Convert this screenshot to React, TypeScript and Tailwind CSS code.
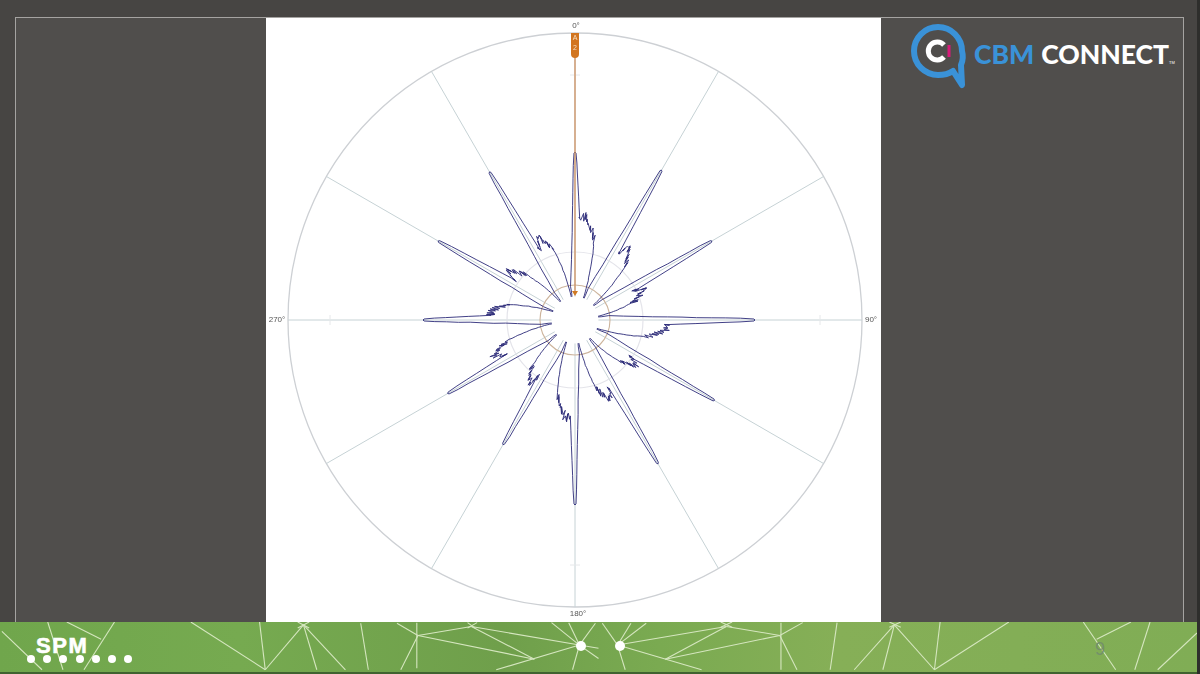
const CX = 575;
const CY = 320;

// spike tip radius and lobe radius for each 30 deg sector, clockwise from 0
const sectors = [
  [168, 104], [173, 92], [158, 76], [180, 92], [161, 76], [166, 88],
  [185, 98], [144, 78], [147, 89], [152, 86], [158, 84], [171, 92],
];

const polar = (deg: number, r: number) => {
  const rad = (deg * Math.PI) / 180;
  return [CX + r * Math.sin(rad), CY - r * Math.cos(rad)];
};

// point at radius r, shifted sideways by a pixel offset from the spoke
const side = (deg: number, r: number, off: number) => polar(deg + (Math.asin(off / r) * 180) / Math.PI, r);

const noise = (n: number) => {
  const v = Math.sin(n * 127.1) * 43758.5453;
  return v - Math.floor(v) - 0.5;
};

const buildTrace = () => {
  const pts: number[][] = [];
  sectors.forEach(([R, L], i) => {
    const a = i * 30;
    const startR = L * (i % 3 === 0 ? 0.98 : 0.86);
    pts.push(polar(a - 8, 20), polar(a - 7, 27));
    for (let k = 0; k < 10; k++) {
      const r = 34 + ((R - 34) * k) / 10;
      pts.push(side(a, r, -1.3 - 2.9 * (1 - (r - 34) / (R - 34)) + noise(i * 9 + k) * 0.5));
    }
    pts.push(side(a, R - 1, -1), polar(a, R), side(a, R - 1, 1));
    for (let k = 1; k <= 6; k++) {
      const r = R + ((startR - R) * k) / 6;
      pts.push(side(a, r, 1.3 + (3.4 * k) / 6));
    }
    for (let k = 0; k <= 18; k++) {
      const t = k / 18;
      const zig = k % 2 === 0 ? 1 : -1;
      const base = t < 0.3 ? startR + ((L - startR) * t) / 0.3 : L - ((t - 0.3) / 0.7) * L * 0.2;
      const r = base + zig * (3 + noise(i * 31 + k) * 4);
      pts.push(polar(a + 3 + 10 * t + noise(i * 13 + k) * 1.6, r));
    }
    const endL = L * 0.8;
    for (let k = 1; k <= 16; k++) {
      const t = k / 16;
      const r = endL + (22 - endL) * t;
      pts.push(polar(a + 13 + 8 * t + noise(i * 17 + k) * 0.5, r + noise(i * 5 + k) * 1.6));
    }
  });
  return pts.map((p, i) => `${i ? 'L' : 'M'}${p[0].toFixed(1)} ${p[1].toFixed(1)}`).join(' ') + ' Z';
};

const footerLines = [
  [5, 65, 110, 185], [125, 36, 165, 185], [175, 36, 265, 90], [300, 36, 220, 185],
  [500, 36, 695, 185], [680, 36, 695, 185], [695, 185, 795, 45], [795, 45, 830, 185],
  [795, 45, 905, 185], [780, 36, 810, 55], [810, 36, 780, 55], [945, 40, 965, 185],
  [1040, 40, 1095, 78], [1092, 38, 1092, 180], [1095, 78, 1050, 185], [1095, 78, 1235, 50],
  [1095, 78, 1400, 152], [1235, 50, 1400, 152], [1225, 38, 1245, 55], [1250, 38, 1225, 55],
  [1235, 50, 1518, 108], [1518, 108, 1300, 185], [1518, 108, 1445, 38], [1518, 108, 1500, 185],
  [1518, 108, 1490, 38], [1518, 108, 1560, 40], [1518, 108, 1568, 118], [1518, 108, 1568, 150],
  [1618, 108, 1638, 185], [1618, 108, 1693, 40], [1618, 108, 1653, 40], [1618, 108, 1578, 40],
  [1618, 108, 1903, 50], [1743, 152, 1903, 50], [1743, 152, 2043, 78], [1618, 108, 1838, 185],
  [1903, 50, 2043, 78], [2043, 78, 2103, 38], [2046, 38, 2046, 185], [2043, 78, 2088, 185],
  [1888, 36, 1918, 52], [1918, 36, 1888, 52], [2193, 38, 2175, 185], [2343, 45, 2238, 185],
  [2343, 45, 2313, 185], [2343, 45, 2448, 185], [2463, 36, 2448, 185], [2643, 36, 2448, 185],
  [2838, 36, 2923, 185], [2963, 36, 2873, 90], [3013, 36, 2973, 185], [3136, 70, 3033, 185],
  [2330, 36, 2360, 52], [2360, 36, 2330, 52],
];

const Chart = () => {
  const spokes = Array.from({ length: 12 }, (_, i) => i * 30);
  return (
    <svg viewBox="266 18 615 604" className="block w-full h-full blur-[0.35px]">
      <circle cx={CX} cy={CY} r={287} fill="none" stroke="#cdd0d4" strokeWidth={1.3} />
      {spokes.map((a) => {
        const p = polar(a, 287);
        return <line key={a} x1={CX} y1={CY} x2={p[0]} y2={p[1]} stroke="#c6d2d5" strokeWidth={1} />;
      })}
      <circle cx={CX} cy={CY} r={68} fill="none" stroke="#e4e4ea" strokeWidth={1.2} />
      <circle cx={CX} cy={CY} r={35} fill="none" stroke="#cdb49c" strokeWidth={1.1} />
      {[0, 90, 180, 270].map((a) => {
        const p = polar(a, 245);
        const dx = a % 180 === 0 ? 5 : 0;
        const dy = a % 180 === 0 ? 0 : 5;
        return <line key={a} x1={p[0] - dx} y1={p[1] - dy} x2={p[0] + dx} y2={p[1] + dy} stroke="#e6e8ea" strokeWidth={1} />;
      })}
      <path d={buildTrace()} fill="none" stroke="#2b2a78" strokeWidth={0.9} strokeLinejoin="round" />
      <circle cx={CX} cy={CY} r={23.5} fill="#ffffff" />
      <line x1={575} y1={56} x2={575} y2={292} stroke="#cf9160" strokeWidth={1.3} />
      <path d="M572 291 L578 291 L575 296 Z" fill="#d07a24" />
      <path d="M571 33 H579 V54 Q579 58 575 58 Q571 58 571 54 Z" fill="#d2751f" />
      <text x={575} y={40} textAnchor="middle" fontSize={7} fill="#f6dcc0" fontFamily="Liberation Sans, sans-serif">A</text>
      <text x={575} y={50} textAnchor="middle" fontSize={7} fill="#f6dcc0" fontFamily="Liberation Sans, sans-serif">2</text>
      <g fontSize={8} fill="#555555" fontFamily="Liberation Sans, sans-serif">
        <text x={576} y={28} textAnchor="middle">0°</text>
        <text x={871} y={322} textAnchor="middle">90°</text>
        <text x={578} y={616} textAnchor="middle">180°</text>
        <text x={277} y={322} textAnchor="middle">270°</text>
      </g>
    </svg>
  );
};

const Logo = () => (
  <div className="flex items-start">
    <svg width="58" height="66" viewBox="0 0 58 66" className="shrink-0">
      <path
        d="M27 3 A24 24 0 1 0 27 51 Q36 51 42 47 L51 61 L50 41 Q53 34 51 27 A24 24 0 0 0 27 3 Z"
        fill="none"
        stroke="#3a92d8"
        strokeWidth={6}
        strokeLinejoin="round"
      />
      <path d="M33 21 A9 9 0 1 0 33 33" fill="none" stroke="#ffffff" strokeWidth={5} />
      <line x1={38} y1={21} x2={38} y2={33} stroke="#d81b7a" strokeWidth={3} />
    </svg>
    <span className="ml-[5px] mt-[17px] text-[26.5px] leading-[26px] font-black text-[#3a92d8] [font-family:Lato,sans-serif]">CBM</span>
    <span className="ml-[7px] mt-[17px] text-[26.5px] leading-[26px] font-black text-white [font-family:Lato,sans-serif]">CONNECT</span>
    <span className="mt-[37px] text-[4px] leading-none text-white [font-family:'Liberation_Sans',sans-serif]">TM</span>
  </div>
);

const Footer = () => (
  <div className="relative h-[52px] bg-[linear-gradient(90deg,#70a64c_0%,#76aa50_20%,#6f9f4b_42%,#7aaa51_55%,#86af57_70%,#80ad55_100%)] border-b-2 border-[#3f6330] overflow-hidden">
    <svg viewBox="0 36 3136 156" preserveAspectRatio="none" className="absolute inset-0 w-full h-full blur-[0.3px]">
      {footerLines.map((l, i) => (
        <line key={i} x1={l[0]} y1={l[1]} x2={l[2]} y2={l[3]} stroke="#d5e6bf" strokeWidth={1.1} vectorEffect="non-scaling-stroke" />
      ))}
    </svg>
    <div className="absolute left-[576px] top-[19px] w-[10px] h-[10px] rounded-full bg-white" />
    <div className="absolute left-[615px] top-[19px] w-[10px] h-[10px] rounded-full bg-white" />
    <div className="absolute left-[36px] top-[13px] text-[22px] leading-[22px] font-bold tracking-[1.6px] text-white [-webkit-text-stroke:0.6px_white] [font-family:'Liberation_Sans',sans-serif]">SPM</div>
    <div className="absolute left-[27px] top-[33px] flex gap-[8.2px]">
      {[0, 1, 2, 3, 4, 5, 6].map((d) => (
        <div key={d} className="w-[8px] h-[8px] rounded-full bg-white" />
      ))}
    </div>
    <div className="absolute left-[1095px] top-[17px] text-[18px] leading-[20px] text-[#74906a] [font-family:'Liberation_Sans',sans-serif]">9</div>
  </div>
);

export default function App() {
  return (
    <div className="w-[1200px] h-[674px] flex flex-col bg-[#474543] border-r-[3px] border-[#2e2e2c] overflow-hidden">
      <div className="h-[17px] shrink-0" />
      <div className="flex-1 min-h-0 flex pl-[15px] pr-[13px]">
        <div className="flex-1 flex bg-[#504e4c] border-t border-l border-r border-[#a5a3a1]">
          <div className="w-[250px] shrink-0" />
          <div className="w-[615px] shrink-0 bg-white">
            <Chart />
          </div>
          <div className="flex-1 pl-[30px] pt-[6px]">
            <Logo />
          </div>
        </div>
      </div>
      <Footer />
    </div>
  );
}
